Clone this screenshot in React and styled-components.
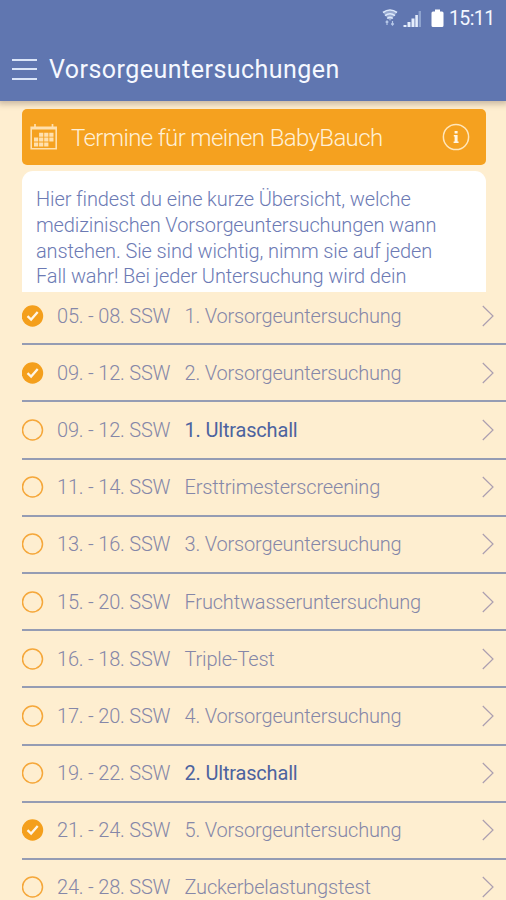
// Imports
import React from 'react'
import styled, { createGlobalStyle } from 'styled-components'



// Data
const appointments = [
  { weeks: '05. - 08. SSW', name: '1. Vorsorgeuntersuchung', done: true },
  { weeks: '09. - 12. SSW', name: '2. Vorsorgeuntersuchung', done: true },
  { weeks: '09. - 12. SSW', name: '1. Ultraschall', strong: true },
  { weeks: '11. - 14. SSW', name: 'Ersttrimesterscreening' },
  { weeks: '13. - 16. SSW', name: '3. Vorsorgeuntersuchung' },
  { weeks: '15. - 20. SSW', name: 'Fruchtwasseruntersuchung' },
  { weeks: '16. - 18. SSW', name: 'Triple-Test' },
  { weeks: '17. - 20. SSW', name: '4. Vorsorgeuntersuchung' },
  { weeks: '19. - 22. SSW', name: '2. Ultraschall', strong: true },
  { weeks: '21. - 24. SSW', name: '5. Vorsorgeuntersuchung', done: true },
  { weeks: '24. - 28. SSW', name: 'Zuckerbelastungstest' },
]

const introLines = [
  'Hier findest du eine kurze Übersicht, welche',
  'medizinischen Vorsorgeuntersuchungen wann',
  'anstehen. Sie sind wichtig, nimm sie auf jeden',
  'Fall wahr! Bei jeder Untersuchung wird dein',
]



// Styles
const GlobalStyle = createGlobalStyle`
  * {
    box-sizing:border-box;
  }
  body {
    margin:0;
    overflow:hidden;
    background:#feeed0;
    font-family:Roboto, 'Liberation Sans', sans-serif;
  }
`

const Screen = styled.div`
  width:506px;
  height:900px;
  display:flex;
  flex-direction:column;
  overflow:hidden;
  background:#feeed0;
`

const Header = styled.header`
  flex:none;
  height:101px;
  background:#6076b0;
  box-shadow:0 1px 6px 2px rgba(120, 100, 90, 0.4);
`

const StatusBar = styled.div`
  height:37px;
  display:flex;
  align-items:center;
  justify-content:flex-end;
  padding-right:11px;
`

const Clock = styled.span`
  margin-left:5px;
  width:46px;
  font-size:19.5px;
  line-height:37px;
  letter-spacing:-0.6px;
  white-space:nowrap;
  color:#f3f7ff;
`

const TitleBar = styled.div`
  height:64px;
  display:flex;
  align-items:center;
  padding-left:12px;
`

const MenuButton = styled.div`
  width:25px;
  height:21px;
  display:flex;
  flex-direction:column;
  justify-content:space-between;
  span {
    height:2px;
    background:#dbe5f8;
  }
`

const Title = styled.h1`
  margin:2px 0 0 12px;
  font-size:25px;
  font-weight:400;
  line-height:64px;
  letter-spacing:0.47px;
  white-space:nowrap;
  color:#f5f8ff;
`

const Banner = styled.div`
  flex:none;
  height:56px;
  margin:8px 20px 0 22px;
  padding:0 16px 0 8px;
  display:flex;
  align-items:center;
  border-radius:5px;
  background:#f5a11f;
  z-index:1;
`

const BannerText = styled.div`
  flex:1;
  margin-left:13px;
  padding-top:1px;
  font-size:24px;
  font-weight:300;
  line-height:56px;
  letter-spacing:-0.63px;
  white-space:nowrap;
  color:#fff0d6;
`

const Intro = styled.div`
  flex:none;
  height:121px;
  margin:6px 20px 0 22px;
  padding:16px 14px 0;
  overflow:hidden;
  border-radius:11px 11px 0 0;
  background:#fff;
`

const IntroLine = styled.div`
  font-size:20px;
  font-weight:300;
  line-height:25.8px;
  letter-spacing:-0.12px;
  white-space:nowrap;
  color:#6c7ab4;
`

const List = styled.div`
  display:flex;
  flex-direction:column;
  margin:-4px 0 0 22px;
`

const Row = styled.div`
  flex:none;
  height:57.2px;
  display:flex;
  align-items:center;
  border-bottom:2px solid #959cb3;
`

const Weeks = styled.span`
  width:127.5px;
  margin-left:13px;
  font-size:20px;
  font-weight:300;
  letter-spacing:-0.2px;
  white-space:nowrap;
  color:#8587a8;
`

const Name = styled.span`
  flex:1;
  font-size:20px;
  font-weight:${(props) => (props.$strong ? 400 : 300)};
  letter-spacing:${(props) => (props.$strong ? '-0.18px' : '-0.17px')};
  white-space:nowrap;
  color:${(props) => (props.$strong ? '#4c639f' : '#8587a8')};
`

const Chevron = styled.svg`
  flex:none;
  width:12px;
  height:22px;
  margin-right:12px;
`



// Icons
const StatusIcons = () => (
  <svg width="62" height="22" viewBox="0 0 62 22" fill="none">
    <g stroke="#dce8fb" strokeWidth="1.6">
      <path d="M1 4.5Q8 -0.5 15 4.5" />
      <path d="M3 7.7Q8 3.8 13 7.7" />
      <path d="M5.2 10.5Q8 8.2 10.8 10.5" />
    </g>
    <path d="M1 4.5Q8 0 15 4.5L8 13Z" fill="#dce8fb" opacity=".45" />
    <path d="M5 13v4M3.7 14.5L5 13l1.3 1.5M10.5 13v4M9.2 15.5l1.3 1.5 1.3-1.5" stroke="#b6c8e8" strokeWidth="1.2" />
    <path d="M21.5 17h3v2h-3zM25.5 14h3v5h-3zM29.500 10.500h3v8.500h-3z" fill="#e5eefc" />
    <path d="M33.300 7h2.600v12h-2.600z" fill="#e5eefc" />
    <path d="M36.600 3h2.400v16h-2.400z" fill="#8ea3ce" />
    <path d="M53 1.500h5v2h2q1.500 0 1.500 1.500v12.500q0 1.500-1.500 1.500h-9q-1.500 0-1.500-1.500V5q0-1.500 1.500-1.500h2z" fill="#fff" />
  </svg>
)

const CalendarIcon = () => (
  <svg width="28" height="28" viewBox="0 0 28 28" fill="none" stroke="#ffe0ae">
    <path d="M1.200 4.200h25v21.500h-25z" strokeWidth="1.600" />
    <path d="M1.200 5.300h25" strokeWidth="2.400" />
    <path d="M5 1v5M22.500 1v5" strokeWidth="1.700" />
    <g strokeWidth="4" strokeDasharray="4.200 .9">
      <path d="M9.100 11.700h14.500" />
      <path d="M4 16.600h19.600" />
      <path d="M4 21.500h14.500" />
    </g>
  </svg>
)

const InfoIcon = () => (
  <svg width="28" height="28" viewBox="0 0 28 28" fill="none">
    <circle cx="14" cy="14" r="12.600" stroke="#ffe6ba" strokeWidth="1.500" />
    <path d="M12.600 8h3v2.600h-3zM11.800 12h3.800v6.500h1v1.500h-5v-1.500h1v-5h-.8z" fill="#fff6e4" />
  </svg>
)

const CheckIcon = ({ done }) => (
  <svg width="22" height="22" viewBox="0 0 22 22" fill="none">
    {done ? (
      <>
        <circle cx="10.500" cy="11" r="10.700" fill="#f49f1c" />
        <path d="M5.500 11.200l3.600 3.300 6.600-7.500" stroke="#fff6e6" strokeWidth="2.300" />
      </>
    ) : (
      <circle cx="10.500" cy="11" r="10" stroke="#f5a73a" strokeWidth="1.500" />
    )}
  </svg>
)



// Main Function
const App = () => {
  return (
    <>
      <GlobalStyle />
      <Screen>
        <Header>
          <StatusBar>
            <StatusIcons />
            <Clock>15:11</Clock>
          </StatusBar>
          <TitleBar>
            <MenuButton>
              <span />
              <span />
              <span />
            </MenuButton>
            <Title>Vorsorgeuntersuchungen</Title>
          </TitleBar>
        </Header>
        <Banner>
          <CalendarIcon />
          <BannerText>Termine für meinen BabyBauch</BannerText>
          <InfoIcon />
        </Banner>
        <Intro>
          {introLines.map((line) => (
            <IntroLine key={line}>{line}</IntroLine>
          ))}
        </Intro>
        <List>
          {appointments.map((item, index) => (
            <Row key={index}>
              <CheckIcon done={item.done} />
              <Weeks>{item.weeks}</Weeks>
              <Name $strong={item.strong}>{item.name}</Name>
              <Chevron viewBox="0 0 12 22" fill="none" stroke="#ac9fb0" strokeWidth="1.200">
                <path d="M.8 1L11 11 .8 21" />
              </Chevron>
            </Row>
          ))}
        </List>
      </Screen>
    </>
  )
}


// Export
export default App;
